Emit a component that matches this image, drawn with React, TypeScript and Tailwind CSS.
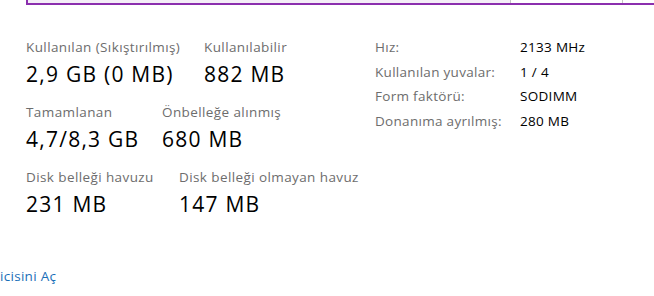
import React from 'react'

const font = { fontFamily: '"Open Sans", "Noto Sans", sans-serif' }

function Stat({ label, value, w }: { label: string; value: string; w: string }) {
  return (
    <div className={w}>
      <div className="text-[13.5px] leading-[18px] tracking-[0.4px] text-[#6d6d6d] whitespace-nowrap">{label}</div>
      <div className="mt-[4px] text-[21px] leading-[28px] tracking-[1.25px] text-black whitespace-nowrap">{value}</div>
    </div>
  )
}

const specs = [
  ['Hız:', '2133 MHz'],
  ['Kullanılan yuvalar:', '1 / 4'],
  ['Form faktörü:', 'SODIMM'],
  ['Donanıma ayrılmış:', '280 MB'],
]

export default function App() {
  return (
    <div className="w-[654px] h-[296px] bg-white overflow-hidden" style={font}>
      {/* graph bottom edge */}
      <div className="h-[5px] pl-[26px]">
        <div className="h-full flex border-l-2 border-b-2 border-[#8b2fae]">
          <div className="w-[482px] bg-[#f4eef7]" />
          <div className="w-px bg-[#c4c4c4]" />
          <div className="w-[111px]" />
          <div className="w-px bg-[#c4c4c4]" />
          <div className="flex-1" />
        </div>
      </div>

      <div className="flex pl-[26px] pt-[31px]">
        {/* left stats */}
        <div className="w-[349px] pt-[2px] flex flex-col gap-[15px]">
          <div className="flex gap-[26px]">
            <Stat label="Kullanılan (Sıkıştırılmış)" value="2,9 GB (0 MB)" w="w-[152px]" />
            <Stat label="Kullanılabilir" value="882 MB" w="" />
          </div>
          <div className="flex gap-[26px]">
            <Stat label="Tamamlanan" value="4,7/8,3 GB" w="w-[110px]" />
            <Stat label="Önbelleğe alınmış" value="680 MB" w="" />
          </div>
          <div className="flex gap-[26px]">
            <Stat label="Disk belleği havuzu" value="231 MB" w="w-[127px]" />
            <Stat label="Disk belleği olmayan havuz" value="147 MB" w="" />
          </div>
        </div>

        {/* right specs */}
        <div className="flex flex-col -mt-[1px] text-[13.5px] leading-[24.6px] tracking-[0.3px]">
          {specs.map(([k, v]) => (
            <div key={k} className="flex">
              <div className="w-[145px] text-[#6d6d6d] whitespace-nowrap">{k}</div>
              <div className="text-black whitespace-nowrap">{v}</div>
            </div>
          ))}
        </div>
      </div>

      <div className="mt-[49px] text-[13.5px] leading-[18px] tracking-[0.3px] text-[#1a6fb8] whitespace-nowrap">icisini Aç</div>
    </div>
  )
}
